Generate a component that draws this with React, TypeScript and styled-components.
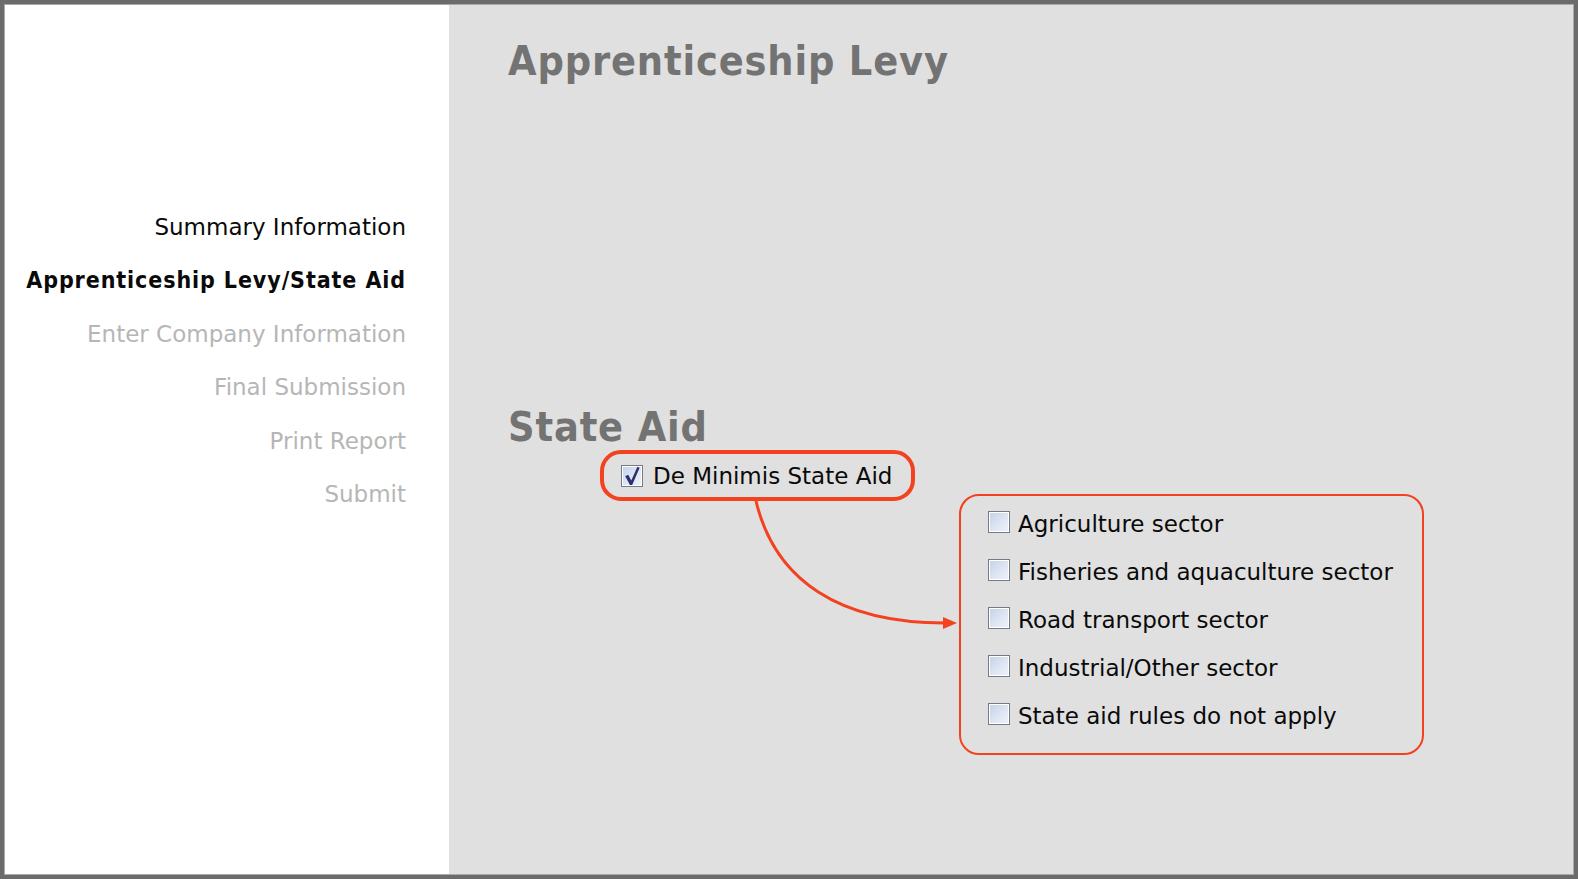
import { createGlobalStyle, styled } from "styled-components";

const GlobalStyle = createGlobalStyle`
  html, body {
    margin: 0;
    padding: 0;
    background: #6b6b6b;
  }
  * {
    box-sizing: border-box;
  }
`;

const navItems = [
  { label: "Summary Information", state: "done" },
  { label: "Apprenticeship Levy/State Aid", state: "current" },
  { label: "Enter Company Information", state: "todo" },
  { label: "Final Submission", state: "todo" },
  { label: "Print Report", state: "todo" },
  { label: "Submit", state: "todo" },
] as const;

const sectors = [
  "Agriculture sector",
  "Fisheries and aquaculture sector",
  "Road transport sector",
  "Industrial/Other sector",
  "State aid rules do not apply",
];

function CheckBox({ checked }: { checked?: boolean }) {
  return (
    <Box>
      {checked && (
        <svg width="20" height="20" viewBox="0 0 20 20">
          <path
            d="M3.2 10.2 L6.2 8.8 L9.3 14.6 L15.4 0.8 L17.6 1.8 L10.2 19 L8 19 Z"
            fill="#2d2f6e"
          />
        </svg>
      )}
    </Box>
  );
}

function App() {
  return (
    <>
      <GlobalStyle />
      <Frame>
        <Sidebar>
          {navItems.map((item) => (
            <NavItem key={item.label} $state={item.state}>
              {item.label}
            </NavItem>
          ))}
        </Sidebar>
        <Main>
          <Heading>Apprenticeship Levy</Heading>
          <Section>
            <Heading>State Aid</Heading>
            <AidArea>
              <Pill>
                <CheckBox checked />
                <span>De Minimis State Aid</span>
              </Pill>
              <SectorBox>
                {sectors.map((s) => (
                  <SectorRow key={s}>
                    <CheckBox />
                    <span>{s}</span>
                  </SectorRow>
                ))}
              </SectorBox>
              <Connector width="380" height="200" viewBox="0 0 380 200">
                <path
                  d="M156 51 C175 131 240 173 345 173"
                  fill="none"
                  stroke="#f2421f"
                  strokeWidth="3"
                />
                <polygon points="343,167 357,173 343,179" fill="#f2421f" />
              </Connector>
            </AidArea>
          </Section>
        </Main>
      </Frame>
    </>
  );
}

const Frame = styled.div`
  width: 1578px;
  height: 879px;
  border: 4px solid #6b6b6b;
  padding: 1px;
  background: #a9a9a9;
  display: grid;
  grid-template-columns: 444px 1fr;
  font-family: "DejaVu Sans", "Liberation Sans", sans-serif;
`;

const Sidebar = styled.nav`
  background: #ffffff;
  padding: 196px 43px 0 0;
  display: flex;
  flex-direction: column;
  align-items: flex-end;
`;

const NavItem = styled.div<{ $state: "done" | "current" | "todo" }>`
  font-size: 23px;
  line-height: 53.4px;
  white-space: nowrap;
  color: ${(p) => (p.$state === "todo" ? "#b6b6b6" : "#0a0a0a")};
  font-weight: ${(p) => (p.$state === "current" ? 700 : 400)};
  font-family: ${(p) =>
    p.$state === "current"
      ? `"DejaVu Sans Condensed", "DejaVu Sans", sans-serif`
      : `"DejaVu Sans", sans-serif`};
  font-stretch: ${(p) => (p.$state === "current" ? "semi-condensed" : "normal")};
  letter-spacing: ${(p) => (p.$state === "current" ? "0.9px" : "0")};
`;

const Main = styled.main`
  background: #e0e0e0;
  padding: 33px 0 0 59px;
`;

const Heading = styled.h1`
  margin: 0;
  font-family: "DejaVu Sans Condensed", "DejaVu Sans", sans-serif;
  font-stretch: semi-condensed;
  font-weight: 700;
  font-size: 41px;
  line-height: 46px;
  letter-spacing: 0.85px;
  color: #737373;
`;

const Section = styled.section`
  margin-top: 320px;
`;

const AidArea = styled.div`
  position: relative;
  margin-left: 92px;
  display: flex;
  flex-direction: column;
  align-items: flex-start;
`;

const Box = styled.span`
  width: 22px;
  height: 22px;
  flex: none;
  display: inline-flex;
  align-items: center;
  justify-content: center;
  border: 1px solid #737c86;
  box-shadow: inset 0 0 0 1px #ffffff;
  background: linear-gradient(135deg, #c3d2e8 0%, #dde6f2 55%, #f0f3f8 100%);
`;

const Pill = styled.div`
  height: 51px;
  display: flex;
  align-items: center;
  gap: 10px;
  padding: 0 19px 0 17px;
  border: 4px solid #f2421f;
  border-radius: 21px;
  font-size: 23px;
  color: #0a0a0a;
  white-space: nowrap;
`;

const SectorBox = styled.div`
  width: 465px;
  margin: -7px 0 0 359px;
  padding: 4px 20px 13px 27px;
  border: 2px solid #f2421f;
  border-radius: 20px;
  display: flex;
  flex-direction: column;
`;

const SectorRow = styled.div`
  height: 48px;
  display: flex;
  align-items: center;
  gap: 8px;
  font-size: 23px;
  color: #0a0a0a;
  white-space: nowrap;

  ${Box} {
    margin-bottom: 4px;
  }
`;

const Connector = styled.svg`
  position: absolute;
  left: 0;
  top: 0;
  overflow: visible;
  pointer-events: none;
`;

export default App;
